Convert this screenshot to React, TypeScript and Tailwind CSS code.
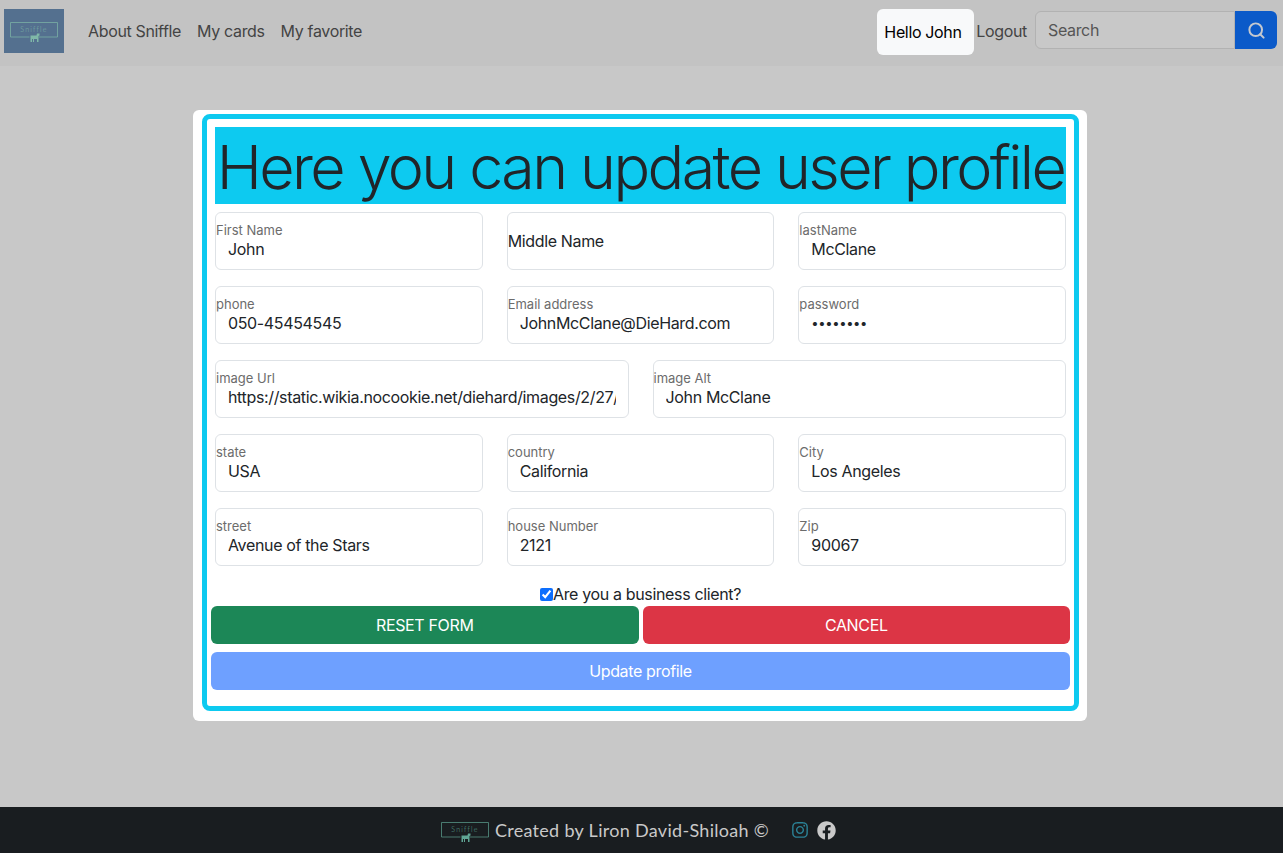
/**
 * Update profile page: dimmed navbar, modal card with the form, dark footer.
 */

import { Search } from 'lucide-react';
import { FaFacebook, FaInstagram } from 'react-icons/fa';

const FONT = "font-['Inter','Liberation_Sans',sans-serif]";

const ROWS = [
  [
    { label: 'First Name', value: 'John' },
    { label: 'Middle Name', value: '', placeholder: true },
    { label: 'lastName', value: 'McClane' },
  ],
  [
    { label: 'phone', value: '050-45454545' },
    { label: 'Email address', value: 'JohnMcClane@DieHard.com' },
    { label: 'password', value: 'password', type: 'password' },
  ],
  [
    { label: 'image Url', value: 'https://static.wikia.nocookie.net/diehard/images/2/27/John_McClane.jpg' },
    { label: 'image Alt', value: 'John McClane' },
  ],
  [
    { label: 'state', value: 'USA' },
    { label: 'country', value: 'California' },
    { label: 'City', value: 'Los Angeles' },
  ],
  [
    { label: 'street', value: 'Avenue of the Stars' },
    { label: 'house Number', value: '2121' },
    { label: 'Zip', value: '90067' },
  ],
];

type FieldProps = { label: string; value: string; placeholder?: boolean; type?: string };

function Field({ label, value, placeholder, type = 'text' }: FieldProps) {
  if (placeholder) {
    return (
      <div className="flex h-[58px] items-center rounded-md border border-[#dee2e6] bg-white text-base text-[#212529]">
        {label}
      </div>
    );
  }
  return (
    <div className="relative h-[58px]">
      <input
        readOnly
        type={type}
        value={value}
        className={`block h-full w-full rounded-md border border-[#dee2e6] bg-white pt-[15px] pr-3 pl-3 text-[#212529] outline-none ${
          type === 'password' ? 'text-[13px]' : 'text-base'
        }`}
      />
      <label className="absolute top-[10px] left-px text-[13px] leading-4 tracking-normal text-[#6c6c6c]">{label}</label>
    </div>
  );
}

function Logo({ className, stroke, bg, viewBox }: { className: string; stroke: string; bg?: string; viewBox: string }) {
  return (
    <svg viewBox={viewBox} className={className}>
      {bg && <rect width="60" height="44" fill={bg} />}
      <path d="M25.5 28H6.5V13.5H53.5V28H35" fill="none" stroke={stroke} strokeWidth="0.7" />
      <text x="30" y="23" textAnchor="middle" fontSize="7" fontWeight="300" letterSpacing="1.2" fontFamily="Lato, sans-serif" fill={stroke}>
        Sniffle
      </text>
      {/* dog */}
      <path d="M26.5 33V26.5H32.5L33 24.5H35.5V26.5L34.5 27V33H33V30H30V33H29V30H28V33Z" fill={stroke} />
    </svg>
  );
}

export default function App() {
  return (
    <div className={`${FONT} flex min-h-screen flex-col bg-[#c8c8c8] tracking-[-0.35px]`}>
      <nav className="flex h-[66px] items-start bg-[#c3c3c3] pt-[9px] pr-[6px] pl-1">
        <Logo className="h-11 w-[60px]" stroke="#7fb8a8" bg="#54708f" viewBox="0 0 60 44" />
        <ul className="mt-[10px] ml-6 flex gap-4 text-base text-[#444]">
          <li>About Sniffle</li>
          <li>My cards</li>
          <li>My favorite</li>
        </ul>
        <div className="ml-auto flex items-start">
          <span className="flex h-[46px] w-[97px] items-center rounded-md bg-[#f8f9fa] pl-[7px] text-base text-black">
            Hello John
          </span>
          <span className="mt-[10px] ml-[2px] text-base text-[#444]">Logout</span>
          <div className="mt-[2px] ml-2 flex h-[38px]">
            <input
              readOnly
              placeholder="Search"
              className="h-full w-[200px] rounded-l-md border border-[#b2b2b2] bg-[#c8c8c8] px-3 text-base text-[#444] outline-none placeholder:text-[#555]"
            />
            <button className="flex h-full w-[42px] items-center justify-center rounded-r-md bg-[#0b5ac9]">
              <Search size={19} strokeWidth={2.5} className="text-[#c4c8cf]" />
            </button>
          </div>
        </div>
      </nav>

      <main className="flex flex-1 items-start justify-center pt-11 pr-[3px]">
        <div className="h-[611px] w-[894px] rounded-md bg-white pt-1 pr-2 pl-[9px]">
          <form className="h-[597px] rounded-lg border-[5px] border-[#0dcaf0] px-1 pt-2">
            <h1 className="mx-1 flex h-[77px] items-center justify-center whitespace-nowrap bg-[#0dcaf0] pt-1 text-[61px] font-light tracking-[-2.6px] text-[#212529]">
              Here you can update user profile
            </h1>
            <div className="mx-1 mt-2 flex flex-col gap-4">
              {ROWS.map((row, i) => (
                <div key={i} className={row.length === 2 ? 'grid grid-cols-2 gap-6' : 'grid grid-cols-3 gap-6'}>
                  {row.map((f) => (
                    <Field key={f.label} {...f} />
                  ))}
                </div>
              ))}
            </div>
            <label className="mt-[16px] flex h-6 items-center justify-center text-base text-[#212529]">
              <input type="checkbox" defaultChecked className="h-[13px] w-[13px] accent-[#0d6efd]" />
              Are you a business client?
            </label>
            <div className="grid grid-cols-2 gap-1">
              <button type="button" className="h-[38px] rounded-md bg-[#1c8757] text-base text-white">
                RESET FORM
              </button>
              <button type="button" className="h-[38px] rounded-md bg-[#dc3545] text-base text-white">
                CANCEL
              </button>
            </div>
            <button type="button" className="mt-2 block h-[38px] w-full rounded-md bg-[#6ea0ff] text-base text-white">
              Update profile
            </button>
          </form>
        </div>
      </main>

      <footer className="flex h-[46px] items-center justify-center bg-[#191d20] pr-[6px]">
        <Logo className="mt-1 h-5 w-12" stroke="#5fa594" viewBox="6 13 48 20" />
        <span className="ml-[6px] font-['Lato',sans-serif] text-lg tracking-[0.3px] text-[#c9c9c9]">Created by Liron David-Shiloah ©</span>
        <FaInstagram className="ml-[22px] text-[18px] text-[#2b8296]" />
        <FaFacebook className="ml-2 text-[19px] text-[#c9c9c9]" />
      </footer>
    </div>
  );
}
